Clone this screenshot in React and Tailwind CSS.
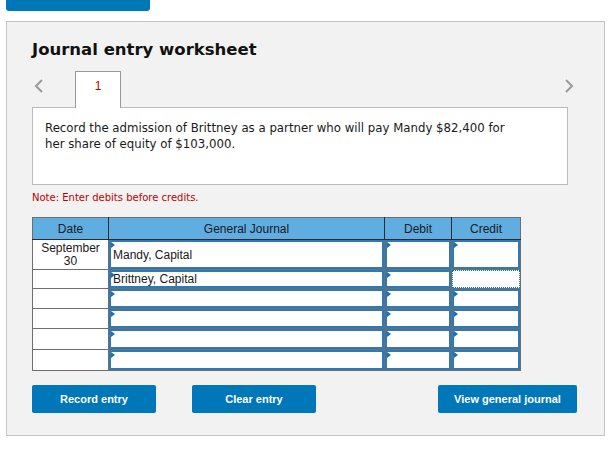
import React from "react";

const verdana = { fontFamily: '"DejaVu Sans", Verdana, sans-serif' };

const Flag = () => (
  <span className="absolute left-0 top-0 w-0 h-0 border-y-[3px] border-y-transparent border-l-[4px] border-l-[#1b6fb5]" />
);

const InputCell = ({ text, focused, h }) => (
  <td className="p-0 border border-[#6e6e6e] align-top">
    {focused ? (
      <div className={`${h} bg-white border border-dotted border-[#0a73c4]`} />
    ) : (
      <div className={`${h} relative bg-white border-2 border-[#2f7ab4] flex items-center pl-[2px] text-[12px] text-[#1a1a1a]`}>
        <Flag />
        {text}
      </div>
    )}
  </td>
);

const rows = [
  { h: "h-[29px]", date: ["September", "30"], account: "Mandy, Capital" },
  { h: "h-[18px]", account: "Brittney, Capital", creditFocus: true },
  { h: "h-[19px]" },
  { h: "h-[19px]" },
  { h: "h-[20px]" },
  { h: "h-[20px]" },
];

const App = () => {
  return (
    <div className="w-[616px] h-[451px] bg-white overflow-hidden" style={{ fontFamily: '"Liberation Sans", Arial, sans-serif' }}>
      <div className="pl-[6px]">
        <button className="-mt-[19px] block w-[144px] h-[30px] bg-[#0077b8] rounded-[3px] text-white text-[12px] font-bold">
          View transaction list
        </button>
      </div>

      <div className="mt-[10px] ml-[6px] w-[599px] h-[415px] bg-[#f2f2f2] border border-[#c4c4c4] pl-[25px] pt-[17px]">
        <h1 className="text-[16.5px] font-bold text-[#111] leading-[22px]" style={verdana}>
          Journal entry worksheet
        </h1>

        <div className="mt-[10px] flex items-center w-[542px] h-[37px]">
          <svg width="10" height="14" viewBox="0 0 10 14" className="ml-[2px] mt-[-8px]">
            <path d="M8 1 L2 7 L8 13" fill="none" stroke="#9a9a9a" strokeWidth="2" />
          </svg>
          <div className="ml-[31px] self-end w-[46px] h-[37px] bg-white border border-b-0 border-[#9a9a9a] relative z-10 flex justify-center pt-[5px] text-[12px] text-[#c00000]">
            1
          </div>
          <svg width="10" height="14" viewBox="0 0 10 14" className="ml-auto mt-[-8px]">
            <path d="M2 1 L8 7 L2 13" fill="none" stroke="#9a9a9a" strokeWidth="2" />
          </svg>
        </div>

        <div
          className="-mt-px w-[536px] h-[78px] bg-white border border-[#bcbcbc] pl-[12px] pr-[50px] pt-[12px] text-[11.75px] leading-[16px] text-[#1a1a1a]"
          style={verdana}
        >
          Record the admission of Brittney as a partner who will pay Mandy $82,400 for her share of equity of $103,000.
        </div>

        <p className="mt-[7px] text-[10px] text-[#c00000] leading-[12px]" style={verdana}>
          Note: Enter debits before credits.
        </p>

        <table className="mt-[13px] border-collapse table-fixed w-[488px] text-[12px] text-[#1a1a1a] border border-[#6e6e6e]">
          <colgroup>
            <col className="w-[76px]" />
            <col className="w-[276px]" />
            <col className="w-[67px]" />
            <col className="w-[69px]" />
          </colgroup>
          <thead>
            <tr className="h-[22px] bg-[#60ade2]">
              <th className="p-0 font-normal border border-[#2b2b2b] border-l-[#6e6e6e] border-t-[#6e6e6e]">Date</th>
              <th className="p-0 font-normal border border-[#2b2b2b] border-t-[#6e6e6e]">General Journal</th>
              <th className="p-0 font-normal border border-[#2b2b2b] border-t-[#6e6e6e]">Debit</th>
              <th className="p-0 font-normal border border-[#2b2b2b] border-t-[#6e6e6e] border-r-[#6e6e6e]">Credit</th>
            </tr>
          </thead>
          <tbody>
            {rows.map((r, i) => (
              <tr key={i}>
                <td className="p-0 border border-[#6e6e6e] bg-white text-center leading-[13px]">
                  {r.date && (
                    <>
                      {r.date[0]}
                      <br />
                      {r.date[1]}
                    </>
                  )}
                </td>
                <InputCell h={r.h} text={r.account} />
                <InputCell h={r.h} />
                <InputCell h={r.h} focused={r.creditFocus} />
              </tr>
            ))}
          </tbody>
        </table>

        <div className="mt-[14px] flex w-[545px] text-[11px] font-bold text-white">
          <button className="w-[124px] h-[28px] bg-[#0077b8] rounded-[2px]">Record entry</button>
          <button className="ml-[36px] w-[124px] h-[28px] bg-[#0077b8] rounded-[2px]">Clear entry</button>
          <button className="ml-auto w-[139px] h-[28px] bg-[#0077b8] rounded-[2px]">View general journal</button>
        </div>
      </div>
    </div>
  );
};

export default App;
